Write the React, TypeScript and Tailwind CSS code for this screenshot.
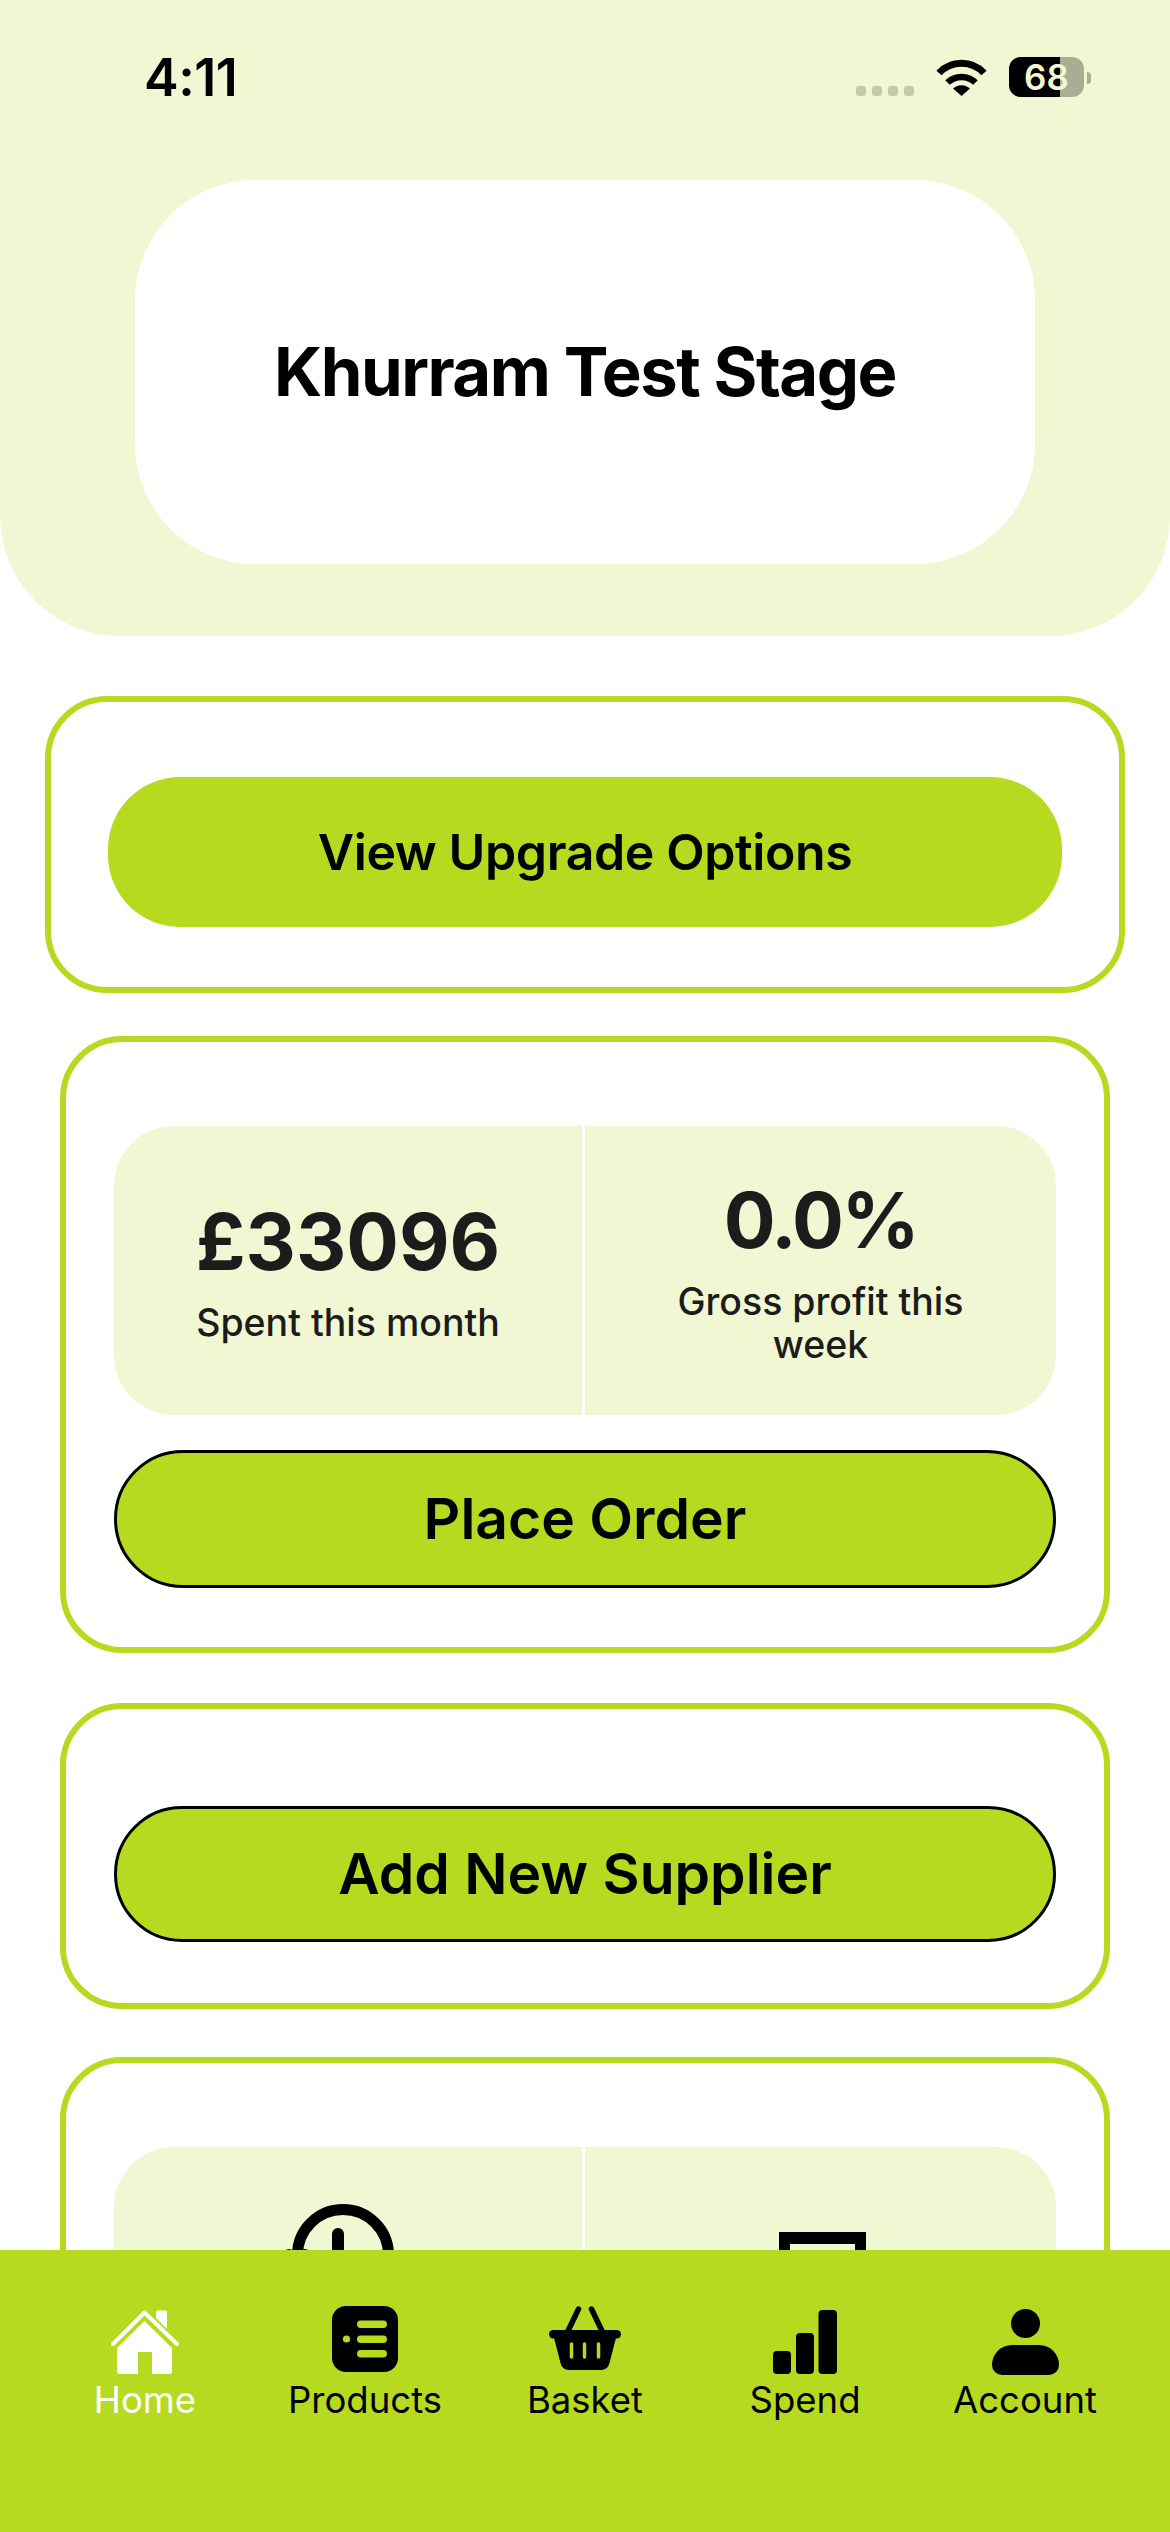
// Home dashboard screen: header, upgrade card, spend stats, supplier card, tab bar.

function WifiIcon() {
  return (
    <svg width="51" height="37" viewBox="0 0 51 37" fill="none">
      <path d="M3 14C15 1 36 1 48 14" stroke="#000" strokeWidth="7" />
      <path d="M11.500 23.500C19 16 32 16 39.500 23.500" stroke="#000" strokeWidth="6.500" />
      <path d="M17 29.500C22 25 29 25 34 29.500L25.500 37Z" fill="#000" />
    </svg>
  )
}

function HomeIcon() {
  return (
    <svg width="68" height="65" viewBox="0 0 68 65" fill="none">
      <path d="M2 34L33.500 2.500L66 34" stroke="#fff" strokeWidth="4" strokeLinecap="round" strokeLinejoin="round" />
      <path d="M45 2.500a2 2 0 0 1 2-2h7a2 2 0 0 1 2 2V19L45 8Z" fill="#fff" />
      <path d="M33.500 11L61 38V61a3 3 0 0 1-3 3H41V42H27V64H9a3 3 0 0 1-3-3V38Z" fill="#fff" />
    </svg>
  )
}

function ProductsIcon() {
  return (
    <svg width="66" height="66" viewBox="0 0 66 66" fill="none">
      <rect width="66" height="66" rx="14" fill="#000" />
      <rect x="25" y="14.500" width="30" height="7.500" rx="3.700" fill="#b5da1f" />
      <rect x="25" y="29.500" width="30" height="7.500" rx="3.700" fill="#b5da1f" />
      <rect x="25" y="44" width="30" height="7.500" rx="3.700" fill="#b5da1f" />
      <circle cx="14.500" cy="33" r="3.600" fill="#b5da1f" />
    </svg>
  )
}

function BasketIcon() {
  return (
    <svg width="72" height="64" viewBox="0 0 72 64" fill="none">
      <path d="M29.500 3L18.500 26M42.500 3L53.500 26" stroke="#000" strokeWidth="5.500" strokeLinecap="round" />
      <rect y="24" width="72" height="8.500" rx="4.200" fill="#000" />
      <path d="M4 28H68L60.500 57a9 9 0 0 1-8.500 7H20a9 9 0 0 1-8.500-7Z" fill="#000" />
      <path d="M22.500 38V51M35.500 38V51M49.500 38V51" stroke="#b5da1f" strokeWidth="3.500" strokeLinecap="round" />
    </svg>
  )
}

function SpendIcon() {
  return (
    <svg width="64" height="64" viewBox="0 0 64 64" fill="#000">
      <rect y="41" width="18" height="23" rx="4" />
      <rect x="23" y="23" width="18" height="41" rx="4" />
      <rect x="45.500" width="18.500" height="64" rx="4" />
    </svg>
  )
}

function AccountIcon() {
  return (
    <svg width="67" height="66" viewBox="0 0 67 66" fill="#000">
      <ellipse cx="33.500" cy="14.500" rx="14.500" ry="14.500" />
      <path d="M20 36H47A20 20 0 0 1 67 56A10 10 0 0 1 57 66H10A10 10 0 0 1 0 56A20 20 0 0 1 20 36Z" />
    </svg>
  )
}

const TABS = [
  { label: 'Home', icon: <HomeIcon />, pad: 'pt-[4px]', active: true },
  { label: 'Products', icon: <ProductsIcon />, pad: 'pt-0' },
  { label: 'Basket', icon: <BasketIcon />, pad: 'pt-0' },
  { label: 'Spend', icon: <SpendIcon />, pad: 'pt-[4px]' },
  { label: 'Account', icon: <AccountIcon />, pad: 'pt-[3px]' },
]

export default function App() {
  return (
    <div className="relative h-[2532px] w-[1170px] overflow-hidden bg-white font-['Inter',sans-serif] text-black">
      {/* header */}
      <header className="h-[636px] rounded-b-[120px] bg-[#f0f7d2] px-[135px]">
        <div className="-mx-[135px] flex h-[180px] items-start justify-between pl-[144px] pr-[79px]">
          <span className="mt-[48px] text-[52px] leading-[60px] font-semibold tracking-[-0.5px]">4:11</span>
          <div className="mt-[57px] flex items-start">
            <div className="mt-[29px] flex gap-[6px]">
              <span className="h-[10px] w-[10px] rounded-[3px] bg-[#c5cba6]" />
              <span className="h-[10px] w-[10px] rounded-[3px] bg-[#c5cba6]" />
              <span className="h-[10px] w-[10px] rounded-[3px] bg-[#c5cba6]" />
              <span className="h-[10px] w-[10px] rounded-[3px] bg-[#c5cba6]" />
            </div>
            <div className="ml-[22px] mt-[2px]">
              <WifiIcon />
            </div>
            <div className="relative ml-[22px] h-[40px] w-[75px] overflow-hidden rounded-[12px] bg-[#a9ad93]">
              <div className="h-full w-[51px] bg-black" />
              <span className="absolute inset-0 flex items-center justify-center text-[35px] font-semibold text-[#f0f7d2]">
                68
              </span>
            </div>
            <span className="ml-[3px] mt-[15px] h-[12px] w-[4px] rounded-r-[4px] bg-[#a9ad93]" />
          </div>
        </div>
        <div className="flex h-[384px] items-center justify-center rounded-[120px] bg-white text-[67px] font-bold tracking-[-1.5px]">
          Khurram Test Stage
        </div>
      </header>

      {/* upgrade */}
      <section className="mx-[45px] mt-[60px] box-border h-[297px] rounded-[62px] border-[6px] border-[#b5da1f] px-[57px] pt-[75px]">
        <button type="button" className="h-[150px] w-full rounded-[72px] bg-[#b5da1f] text-[50px] font-semibold tracking-[-0.4px]">
          View Upgrade Options
        </button>
      </section>

      {/* spend stats */}
      <section className="mx-[60px] mt-[43px] rounded-[62px] border-[6px] border-[#b5da1f] px-[48px] pb-[59px] pt-[84px]">
        <div className="grid h-[289px] grid-cols-[468px_471px] gap-[3px] overflow-hidden rounded-[60px] text-[#1c1c1c]">
          <div className="flex flex-col items-center justify-center bg-[#f0f7d2]">
            <span className="text-[78px] leading-[90px] font-bold">£33096</span>
            <span className="mt-[14px] text-[37.500px] leading-[43px] font-medium">Spent this month</span>
          </div>
          <div className="flex flex-col items-center justify-center bg-[#f0f7d2] px-[60px] text-center">
            <span className="text-[77px] leading-[90px] font-bold tracking-[-2.5px]">0.0%</span>
            <span className="mt-[15px] text-[37.500px] leading-[43px] font-medium">Gross profit this week</span>
          </div>
        </div>
        <button type="button" className="mt-[35px] h-[138px] w-full rounded-full border-[3px] border-black bg-[#b5da1f] text-[57px] font-semibold">
          Place Order
        </button>
      </section>

      {/* supplier */}
      <section className="mx-[60px] mt-[50px] rounded-[62px] border-[6px] border-[#b5da1f] px-[48px] pb-[61px] pt-[97px]">
        <button type="button" className="h-[136px] w-full rounded-full border-[3px] border-black bg-[#b5da1f] text-[57px] font-semibold">
          Add New Supplier
        </button>
      </section>

      {/* shortcuts, runs on under the tab bar */}
      <section className="mx-[60px] mt-[48px] rounded-[62px] border-[6px] border-[#b5da1f] px-[48px] pb-[60px] pt-[84px]">
        <div className="grid h-[289px] grid-cols-[468px_471px] gap-[3px] overflow-hidden rounded-[60px]">
          <div className="flex justify-center bg-[#f0f7d2] pt-[57px]">
            <svg width="130" height="110" viewBox="0 0 130 110" fill="none">
              <circle cx="60" cy="51" r="45.500" stroke="#000" strokeWidth="11" />
              <path d="M55 30V60" stroke="#000" strokeWidth="12" strokeLinecap="round" />
              <circle cx="6" cy="51" r="6" fill="#000" />
              <circle cx="22" cy="51" r="6" fill="#000" />
            </svg>
          </div>
          <div className="flex justify-center bg-[#f0f7d2] pt-[85px]">
            <div className="ml-[4px] h-[90px] w-[87px] border-x-[11px] border-t-[12px] border-black" />
          </div>
        </div>
      </section>

      {/* tab bar */}
      <nav className="absolute inset-x-0 bottom-0 grid h-[282px] grid-cols-5 bg-[#b5da1f] px-[35px] pt-[56px]">
        {TABS.map((tab) => (
          <div key={tab.label} className={`flex flex-col items-center ${tab.active ? 'text-white' : 'text-black'}`}>
            <div className={`flex h-[70px] items-start ${tab.pad}`}>{tab.icon}</div>
            <span className="mt-[2px] text-[36.500px] leading-[44px] font-normal">{tab.label}</span>
          </div>
        ))}
      </nav>
    </div>
  )
}
